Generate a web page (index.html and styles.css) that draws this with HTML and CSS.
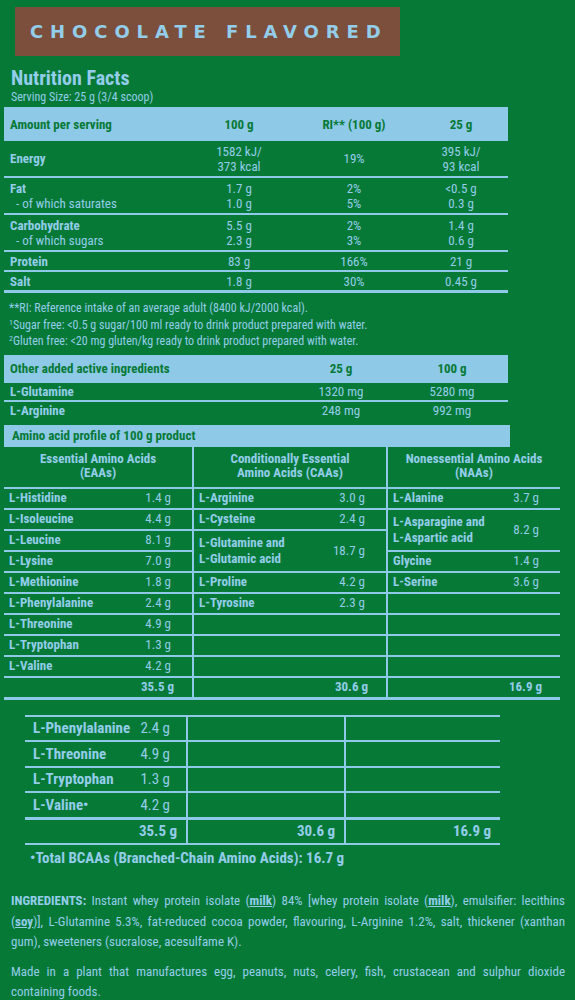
FILE: index.html
```html
<!DOCTYPE html>
<html lang="en">
<head>
  <meta charset="UTF-8">
  <title>Chocolate Flavored - Nutrition Facts</title>
  <link rel="stylesheet" href="styles.css">
</head>
<body>
  <div class="banner">CHOCOLATE FLAVORED</div>

  <h1 class="title">Nutrition Facts</h1>
  <div class="serving">Serving Size: 25 g (3/4 scoop)</div>

  <table class="facts">
    <tr class="head">
      <th class="name">Amount per serving</th><th>100 g</th><th>RI** (100 g)</th><th>25 g</th>
    </tr>
    <tr class="two">
      <td class="name">Energy</td><td>1582 kJ/<br>373 kcal</td><td>19%</td><td>395 kJ/<br>93 kcal</td>
    </tr>
    <tr class="two">
      <td class="name">Fat<br><span class="sub">- of which saturates</span></td><td>1.7 g<br>1.0 g</td><td>2%<br>5%</td><td>&lt;0.5 g<br>0.3 g</td>
    </tr>
    <tr class="two">
      <td class="name">Carbohydrate<br><span class="sub">- of which sugars</span></td><td>5.5 g<br>2.3 g</td><td>2%<br>3%</td><td>1.4 g<br>0.6 g</td>
    </tr>
    <tr>
      <td class="name">Protein</td><td>83 g</td><td>166%</td><td>21 g</td>
    </tr>
    <tr class="last">
      <td class="name">Salt</td><td>1.8 g</td><td>30%</td><td>0.45 g</td>
    </tr>
  </table>

  <div class="notes">
    <p>**RI: Reference intake of an average adult (8400 kJ/2000 kcal).</p>
    <p><sup>1</sup>Sugar free: &lt;0.5 g sugar/100 ml ready to drink product prepared with water.</p>
    <p><sup>2</sup>Gluten free: &lt;20 mg gluten/kg ready to drink product prepared with water.</p>
  </div>

  <table class="active">
    <tr class="head">
      <th class="name">Other added active ingredients</th><th>25 g</th><th>100 g</th>
    </tr>
    <tr><td class="name">L-Glutamine</td><td>1320 mg</td><td>5280 mg</td></tr>
    <tr class="nob"><td class="name">L-Arginine</td><td>248 mg</td><td>992 mg</td></tr>
  </table>

  <div class="band">Amino acid profile of 100 g product</div>

  <table class="amino">
    <colgroup>
      <col class="n1"><col class="v1"><col class="n2"><col class="v2"><col class="n3"><col class="v3">
    </colgroup>
    <tr class="groups">
      <th colspan="2">Essential Amino Acids<br>(EAAs)</th>
      <th colspan="2" class="sep">Conditionally Essential<br>Amino Acids (CAAs)</th>
      <th colspan="2" class="sep">Nonessential Amino Acids<br>(NAAs)</th>
    </tr>
    <tr>
      <td class="aa">L-Histidine</td><td class="val">1.4 g</td>
      <td class="aa sep">L-Arginine</td><td class="val">3.0 g</td>
      <td class="aa sep">L-Alanine</td><td class="val">3.7 g</td>
    </tr>
    <tr>
      <td class="aa">L-Isoleucine</td><td class="val">4.4 g</td>
      <td class="aa sep">L-Cysteine</td><td class="val">2.4 g</td>
      <td class="aa sep" rowspan="2">L-Asparagine and<br>L-Aspartic acid</td><td class="val" rowspan="2">8.2 g</td>
    </tr>
    <tr>
      <td class="aa">L-Leucine</td><td class="val">8.1 g</td>
      <td class="aa sep" rowspan="2">L-Glutamine and<br>L-Glutamic acid</td><td class="val" rowspan="2">18.7 g</td>
    </tr>
    <tr>
      <td class="aa">L-Lysine</td><td class="val">7.0 g</td>
      <td class="aa sep">Glycine</td><td class="val">1.4 g</td>
    </tr>
    <tr>
      <td class="aa">L-Methionine</td><td class="val">1.8 g</td>
      <td class="aa sep">L-Proline</td><td class="val">4.2 g</td>
      <td class="aa sep">L-Serine</td><td class="val">3.6 g</td>
    </tr>
    <tr>
      <td class="aa">L-Phenylalanine</td><td class="val">2.4 g</td>
      <td class="aa sep">L-Tyrosine</td><td class="val">2.3 g</td>
      <td class="aa sep"></td><td class="val"></td>
    </tr>
    <tr>
      <td class="aa">L-Threonine</td><td class="val">4.9 g</td>
      <td class="aa sep"></td><td class="val"></td>
      <td class="aa sep"></td><td class="val"></td>
    </tr>
    <tr>
      <td class="aa">L-Tryptophan</td><td class="val">1.3 g</td>
      <td class="aa sep"></td><td class="val"></td>
      <td class="aa sep"></td><td class="val"></td>
    </tr>
    <tr>
      <td class="aa">L-Valine</td><td class="val">4.2 g</td>
      <td class="aa sep"></td><td class="val"></td>
      <td class="aa sep"></td><td class="val"></td>
    </tr>
    <tr class="total">
      <td class="aa"></td><td class="val">35.5 g</td>
      <td class="aa sep"></td><td class="val">30.6 g</td>
      <td class="aa sep"></td><td class="val">16.9 g</td>
    </tr>
  </table>

  <table class="zoomed">
    <colgroup>
      <col class="zn"><col class="zv"><col class="z2"><col class="z3">
    </colgroup>
    <tr>
      <td class="aa">L-Phenylalanine</td><td class="val">2.4 g</td><td class="sep"></td><td class="sep"></td>
    </tr>
    <tr>
      <td class="aa">L-Threonine</td><td class="val">4.9 g</td><td class="sep"></td><td class="sep"></td>
    </tr>
    <tr>
      <td class="aa">L-Tryptophan</td><td class="val">1.3 g</td><td class="sep"></td><td class="sep"></td>
    </tr>
    <tr class="thick">
      <td class="aa">L-Valine&#8226;</td><td class="val">4.2 g</td><td class="sep"></td><td class="sep"></td>
    </tr>
    <tr class="total">
      <td class="aa"></td><td class="val">35.5 g</td><td class="sep val">30.6 g</td><td class="sep val">16.9 g</td>
    </tr>
  </table>
  <div class="bcaa">&#8226;Total BCAAs (Branched-Chain Amino Acids): 16.7 g</div>

  <div class="ingredients">
    <p><b>INGREDIENTS:</b> Instant whey protein isolate (<b class="allergen">milk</b>) 84% [whey protein isolate (<b class="allergen">milk</b>), emulsifier: lecithins (<b class="allergen">soy</b>)], L-Glutamine 5.3%, fat-reduced cocoa powder, flavouring, L-Arginine 1.2%, salt, thickener (xanthan gum), sweeteners (sucralose, acesulfame K).</p>
    <p>Made in a plant that manufactures egg, peanuts, nuts, celery, fish, crustacean and sulphur dioxide containing foods.</p>
  </div>
</body>
</html>
```

FILE: styles.css
```css
body {
  margin: 0;
  width: 575px;
  min-height: 1000px;
  background: #077936;
  color: #93cdea;
  font-family: Roboto, "DejaVu Sans", sans-serif;
  font-stretch: condensed;
  font-size: 13px;
}
.banner {
  margin: 7px 0 0 15px;
  width: 370px;
  height: 49px;
  padding-left: 15px;
  display: flex;
  align-items: center;
  background: #7b4f3c;
  color: #93cdea;
  font-family: "DejaVu Sans", sans-serif;
  font-stretch: normal;
  font-weight: bold;
  font-size: 18px;
  letter-spacing: 6.9px;
}
.title {
  margin: 10px 0 0 11px;
  font-size: 20px;
  line-height: 24px;
  font-weight: bold;
}
.serving {
  margin: 0 0 3px 11px;
  font-size: 12px;
  line-height: 14px;
}
table {
  border-collapse: collapse;
  margin-left: 4px;
}
td, th {
  padding: 0;
}
.head {
  background: #8ec9e8;
  color: #077936;
}
.head th {
  font-weight: bold;
}
.name {
  text-align: left;
  padding-left: 6px;
}
.facts {
  width: 504px;
  border-top: 2px solid #8ec9e8;
}
.facts th, .facts td {
  text-align: center;
  line-height: 15px;
  border-bottom: 2px solid #8ec9e8;
}
.facts th.name, .facts td.name {
  text-align: left;
}
.facts .head th {
  height: 30px;
}
.facts td {
  height: 18px;
}
.facts .two td {
  height: 35px;
}
.facts .name {
  width: 174px;
  font-weight: bold;
}
.facts .sub {
  font-weight: normal;
  padding-left: 6px;
}
.facts tr > :nth-child(2) { width: 110px; }
.facts tr > :nth-child(3) { width: 120px; }
.facts .last td {
  border-bottom-width: 3px;
}
.notes {
  margin: 7px 0 5px 9px;
  font-size: 12px;
  line-height: 16.5px;
}
.notes p {
  margin: 0;
}
.notes sup {
  font-size: 8px;
  vertical-align: 4px;
  line-height: 0;
}
.active {
  width: 504px;
}
.active th, .active td {
  text-align: center;
  line-height: 17px;
  border-bottom: 2px solid #8ec9e8;
}
.active th.name, .active td.name {
  text-align: left;
  font-weight: bold;
}
.active .head th {
  height: 28px;
  border-bottom: 0;
}
.active .name {
  width: 276px;
}
.active tr > :nth-child(2) { width: 110px; }
.active .nob td {
  border-bottom: 0;
}
.band {
  margin: 6px 0 0 4px;
  width: 498px;
  height: 22px;
  padding-left: 8px;
  background: #8ec9e8;
  color: #077936;
  font-weight: bold;
  line-height: 22px;
}
.amino {
  width: 556px;
  table-layout: fixed;
}
.n1 { width: 120px; }
.v1 { width: 69px; }
.n2 { width: 125px; }
.v2 { width: 69px; }
.n3 { width: 105px; }
.v3 { width: 68px; }
.amino th {
  height: 35px;
  text-align: center;
  font-weight: bold;
  line-height: 14px;
  vertical-align: top;
  padding-top: 5px;
  border-bottom: 2px solid #8ec9e8;
}
.amino td {
  height: 19px;
  line-height: 16px;
  border-bottom: 2px solid #8ec9e8;
  white-space: nowrap;
}
.amino .sep {
  border-left: 2px solid #8ec9e8;
}
.amino .aa {
  font-weight: bold;
  padding-left: 5px;
}
.amino .val {
  text-align: right;
  padding-right: 21px;
}
.amino .total td {
  font-weight: bold;
  border-bottom-width: 3px;
}
.amino .total .val {
  padding-right: 18px;
}
.zoomed {
  margin: 15px 0 0 25px;
  width: 475px;
  table-layout: fixed;
  border-top: 2px solid #8ec9e8;
  font-size: 15px;
}
.zn { width: 110px; }
.zv { width: 52px; }
.z2 { width: 158px; }
.z3 { width: 155px; }
.zoomed td {
  height: 23.5px;
  line-height: 18px;
  border-bottom: 2px solid #8ec9e8;
  white-space: nowrap;
}
.zoomed .sep {
  border-left: 2px solid #8ec9e8;
}
.zoomed .aa {
  font-weight: bold;
  padding-left: 8px;
}
.zoomed .val {
  text-align: right;
  padding-right: 16px;
}
.zoomed .thick td {
  border-bottom-width: 3px;
}
.zoomed .total td {
  font-weight: bold;
}
.zoomed .total .val {
  padding-right: 9px;
}
.bcaa {
  margin: 3px 0 0 30px;
  font-size: 15px;
  font-weight: bold;
  line-height: 20px;
}
.ingredients {
  margin: 23px 10px 0 11px;
  font-size: 13px;
  line-height: 20.5px;
  text-align: justify;
}
.ingredients p {
  margin: 0 0 9px;
}
.allergen {
  text-decoration: underline;
}
```
